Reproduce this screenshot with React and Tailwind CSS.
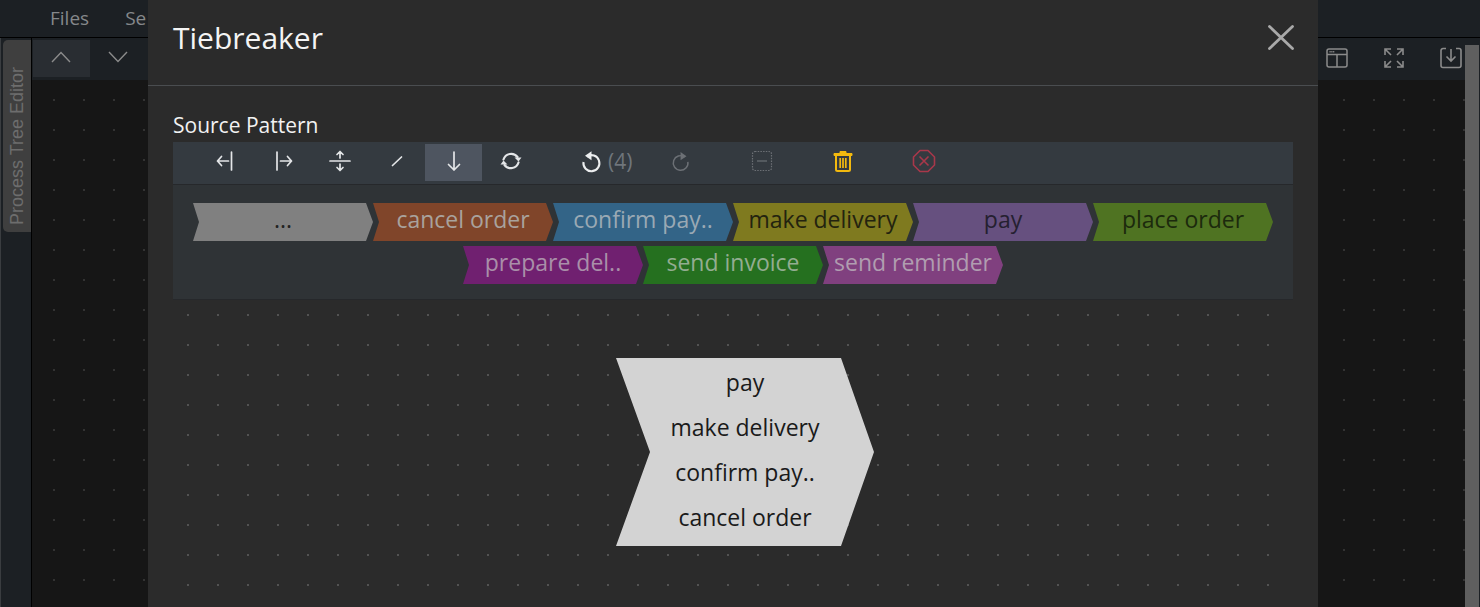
import React from 'react';

const chevrons = [
    { label: '...', bg: 'bg-[#808080]', text: 'text-[#222222]' },
    { label: 'cancel order', bg: 'bg-[#80452a]', text: 'text-[#a9a29d]' },
    { label: 'confirm pay..', bg: 'bg-[#336487]', text: 'text-[#9aa9b4]' },
    { label: 'make delivery', bg: 'bg-[#7f7a1f]', text: 'text-[#23230f]' },
    { label: 'pay', bg: 'bg-[#66507f]', text: 'text-[#252030]' },
    { label: 'place order', bg: 'bg-[#4f7322]', text: 'text-[#1c2a0d]' },
    { label: 'prepare del..', bg: 'bg-[#702070]', text: 'text-[#a98fa9]' },
    { label: 'send invoice', bg: 'bg-[#25701f]', text: 'text-[#93ad91]' },
    { label: 'send reminder', bg: 'bg-[#80407f]', text: 'text-[#b09db0]' },
];

const Icon = ({ children, className = 'w-6 h-6', stroke = 'currentColor', width = 1.7 }) => (
    <svg viewBox="0 0 24 24" className={className} fill="none" stroke={stroke} strokeWidth={width} strokeLinecap="round" strokeLinejoin="round">
        {children}
    </svg>
);

const ToolButton = ({ active, children }) => (
    <button className={`w-[57px] h-[37px] flex items-center justify-center pb-[3px] text-[#e4e6e8] ${active ? 'bg-[#4e5560]' : ''}`}>
        {children}
    </button>
);

const App = () => {
    return (
        <div className="relative w-full h-[607px] overflow-hidden flex flex-col bg-[#1c2024] font-['Open_Sans',sans-serif]">

            <div className="h-[38px] shrink-0 border-b border-black flex items-center pl-[50px] gap-[36px] text-[19px] text-[#85888b]">
                <span>Files</span>
                <span>Se</span>
            </div>

            <div className="flex-1 flex min-h-0">
                <div className="w-[32px] shrink-0 pt-[2px] pl-[2px] border-l border-l-[#3a3d40] border-r border-r-black bg-[#1c2024]">
                    <div className="h-[192px] w-[28px] rounded-l-[5px] bg-[#3f3f3f] flex items-center justify-center pt-[20px]">
                        <span className="[writing-mode:vertical-rl] rotate-180 font-['Liberation_Sans',sans-serif] text-[18px] text-[#6d6d6d] whitespace-nowrap">Process Tree Editor</span>
                    </div>
                </div>

                <div className="flex-1 flex flex-col min-w-0">
                    <div className="h-[42px] shrink-0 flex items-start pt-[2px] pl-px pr-[3px] text-[#8b8b8b]">
                        <button className="w-[57px] h-[37px] bg-[#292d32] flex items-center justify-center">
                            <svg viewBox="0 0 20 12" className="w-[20px] h-[12px] -mt-[4px] -ml-[2px]" fill="none" stroke="currentColor" strokeWidth="1.4"><path d="M1 11 10 1.5 19 11" /></svg>
                        </button>
                        <button className="w-[57px] h-[37px] flex items-center justify-center">
                            <svg viewBox="0 0 20 12" className="w-[20px] h-[12px] -mt-[4px] -ml-[2px]" fill="none" stroke="currentColor" strokeWidth="1.4"><path d="M1 1 10 10.5 19 1" /></svg>
                        </button>
                        <div className="ml-auto flex items-center gap-[35px] pt-[7px]">
                            <svg viewBox="0 0 22 20" className="w-[22px] h-[20px]" fill="none" stroke="currentColor" strokeWidth="1.5">
                                <rect x="1" y="1" width="20" height="18" rx="2" />
                                <path d="M1 6.5h20M11 6.5V19" />
                                <path d="M3.5 3.7h5" strokeDasharray="1.2 .6" />
                            </svg>
                            <svg viewBox="0 0 22 22" className="w-[22px] h-[22px]" fill="none" stroke="currentColor" strokeWidth="1.6">
                                <path d="M2 8V2h6M2 2l6 6M14 2h6v6M20 2l-6 6M2 14v6h6M2 20l6-6M20 14v6h-6M20 20l-6-6" />
                            </svg>
                            <svg viewBox="0 0 22 22" className="w-[22px] h-[22px]" fill="none" stroke="currentColor" strokeWidth="1.6">
                                <path d="M6 1.5H3a2 2 0 0 0-2 2v15a2 2 0 0 0 2 2h16a2 2 0 0 0 2-2v-15a2 2 0 0 0-2-2h-3" />
                                <path d="M11 2v12M6.5 9.5 11 14l4.5-4.5" />
                            </svg>
                        </div>
                    </div>
                    <div className="flex-1 bg-[#161616] bg-[radial-gradient(#333333_1px,transparent_1px)] bg-[size:30px_30px] bg-[position:7px_5px]"></div>
                </div>

                <div className="w-[15px] shrink-0 pt-[7px] pr-px">
                    <div className="h-full bg-[#5f5f5f]"></div>
                </div>
            </div>

            {/* modal */}
            <div className="absolute left-[148px] top-0 bottom-0 w-[1170px] bg-[#2b2b2b] flex flex-col">
                <div className="h-[86px] shrink-0 border-b border-[#4a4d50] flex items-center justify-between pl-[25px] pr-[24px] pb-[10px]">
                    <h1 className="text-[30px] leading-[40px] text-[#f4f4f4]">Tiebreaker</h1>
                    <svg viewBox="0 0 26 25" className="w-[26px] h-[25px] text-[#a9a9a9]" fill="none" stroke="currentColor" strokeWidth="2.8" strokeLinecap="round">
                        <path d="M1.5 1.5 24.5 23.5M24.5 1.5 1.5 23.5" />
                    </svg>
                </div>

                <div className="flex-1 flex flex-col px-[25px] min-h-0">
                    <h2 className="mt-[25px] h-[31px] text-[21px] leading-[29px] text-[#f2f2f2]">Source Pattern</h2>

                    <div className="h-[43px] shrink-0 bg-[#343a40] border-b border-[#26282b] flex items-center pl-[24px] pb-[1px]">
                        <ToolButton>
                            <Icon><path d="M3.5 12h11M7.5 7.5 3.5 12l4 4.5" /><path d="M17.5 3v18" /></Icon>
                        </ToolButton>
                        <ToolButton>
                            <Icon><path d="M9.5 12h11M16.5 7.5l4 4.5-4 4.5" /><path d="M6 3v18" /></Icon>
                        </ToolButton>
                        <ToolButton>
                            <Icon><path d="M2 12h20" /><path d="M12 3v6M9 5.5 12 2.5l3 3M12 15v6M9 18.5l3 3 3-3" /></Icon>
                        </ToolButton>
                        <ToolButton>
                            <Icon><path d="M7.5 16.5 16.5 8" /></Icon>
                        </ToolButton>
                        <ToolButton active>
                            <Icon><path d="M12 3v18M6.5 15.5 12 21l5.5-5.5" /></Icon>
                        </ToolButton>
                        <ToolButton>
                            <Icon width={2.2}>
                                <path d="M4.5 10.5A8 8 0 0 1 18.5 8" />
                                <path d="M19.5 13.5A8 8 0 0 1 5.5 16" />
                                <path d="M22.5 8.5 H15.5 L19.5 12.5Z" fill="currentColor" stroke="none" />
                                <path d="M1.5 15.5 H8.5 L4.5 11.5Z" fill="currentColor" stroke="none" />
                            </Icon>
                        </ToolButton>

                        <button className="ml-[24px] w-[90px] h-[37px] flex items-center pl-[16px] gap-[5px] pb-[3px] text-[#6f757b]">
                            <svg viewBox="0 0 24 24" className="w-6 h-6 text-[#eceeef]" fill="none" stroke="currentColor" strokeWidth="2.1">
                                <path d="M8 7.5A8 8 0 1 1 4.5 13" />
                                <path d="M12.5 2.2v9L6 6.7Z" fill="currentColor" stroke="none" />
                            </svg>
                            <span className="text-[21px] leading-none">(4)</span>
                        </button>
                        <ToolButton>
                            <svg viewBox="0 0 24 24" className="w-[22px] h-[22px] -ml-px text-[#6c7075]" fill="none" stroke="currentColor" strokeWidth="1.6">
                                <path d="M16 7.5A8 8 0 1 0 19.5 13" />
                                <path d="M11.5 2.2v9L18 6.7Z" fill="currentColor" stroke="none" />
                            </svg>
                        </ToolButton>
                        <div className="ml-[24px] -mr-px -translate-x-px">
                            <ToolButton>
                                <svg viewBox="0 0 22 22" className="w-[22px] h-[22px] text-[#6c7075]" fill="none" stroke="currentColor" strokeWidth="1.2">
                                    <rect x="1.5" y="1.5" width="19" height="19" rx="2.5" strokeDasharray="1.5 1.2" />
                                    <path d="M6 11h10" />
                                </svg>
                            </ToolButton>
                        </div>
                        <div className="ml-[24px]">
                            <ToolButton>
                                <svg viewBox="0 0 20 22" className="w-[20px] h-[22px] text-[#f2b90f]" fill="none" stroke="currentColor">
                                    <path d="M1 3.5h18v2H1zM7 3.5V1.5h6v2" fill="currentColor" strokeWidth="1" />
                                    <path d="M3 6v13.5A1.5 1.5 0 0 0 4.5 21h11a1.5 1.5 0 0 0 1.5-1.5V6" strokeWidth="2" />
                                    <path d="M7.2 8v10M10 8v10M12.8 8v10" strokeWidth="1.7" />
                                </svg>
                            </ToolButton>
                        </div>
                        <div className="ml-[24px]">
                            <ToolButton>
                                <svg viewBox="0 0 24 24" className="w-6 h-6 text-[#a8384a]" fill="none" stroke="currentColor" strokeWidth="1.6" strokeLinejoin="round">
                                    <path d="M8 1.5h8L22.5 8v8L16 22.5H8L1.5 16V8Z" />
                                    <path d="M7.5 7.5l9 9M16.5 7.5l-9 9" />
                                </svg>
                            </ToolButton>
                        </div>
                    </div>

                    <div className="h-[115px] shrink-0 bg-[#2f3336] border-b border-[#26282b] px-[20px] pt-[18px] flex flex-wrap justify-center content-start gap-y-[5px]">
                        {chevrons.map((c) => (
                            <div
                                key={c.label}
                                className={`w-[180px] h-[38px] flex items-center justify-center text-[23px] leading-none pb-[6px] [clip-path:polygon(0_0,173px_0,180px_50%,173px_100%,0_100%,6px_50%)] ${c.bg} ${c.text}`}
                            >
                                {c.label}
                            </div>
                        ))}
                    </div>

                    <div className="flex-1 min-h-0 flex justify-center pl-[24px] pt-[58px] bg-[radial-gradient(#525252_1px,transparent_1px)] bg-[size:30px_30px]">
                        <div className="w-[258px] h-[188px] pb-[6px] bg-[#d3d3d3] text-[#1a1a1a] text-[23px] flex flex-col items-center justify-center gap-[13px] leading-[32px] [clip-path:polygon(0_0,225px_0,258px_50%,225px_100%,0_100%,34px_50%)]">
                            <span>pay</span>
                            <span>make delivery</span>
                            <span>confirm pay..</span>
                            <span>cancel order</span>
                        </div>
                    </div>
                </div>
            </div>
        </div>
    );
};

export default App;
